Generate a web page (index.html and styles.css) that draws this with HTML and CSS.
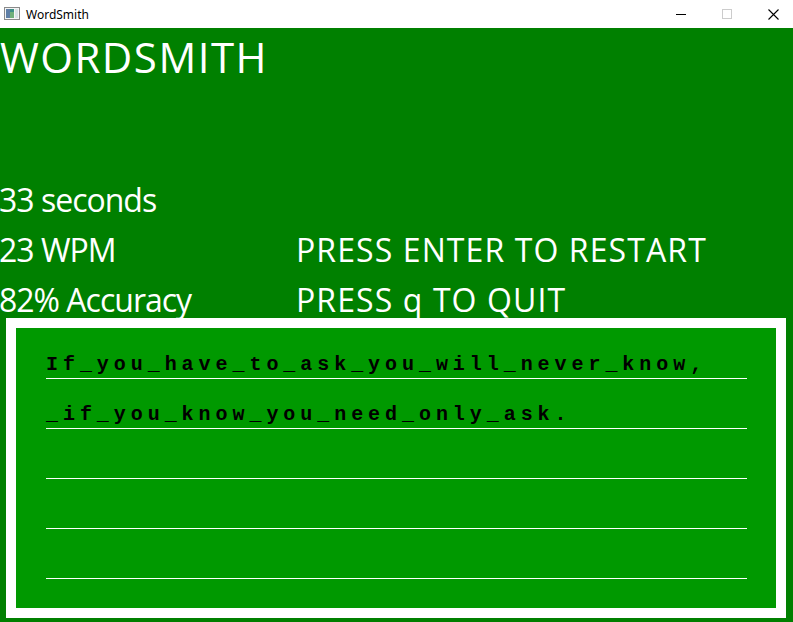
FILE: index.html
```html
<!DOCTYPE html>
<html>
<head>
<meta charset="utf-8">
<title>WordSmith</title>
<link rel="stylesheet" href="styles.css">
</head>
<body>
<div class="window">
  <div class="titlebar">
    <div class="app-icon">
      <svg width="16" height="13" viewBox="0 0 16 13">
        <rect x="0.5" y="0.5" width="15" height="12" fill="#f4f4f4" stroke="#8a8a8a"/>
        <rect x="2" y="2" width="8" height="9" fill="#3d8f86"/>
        <rect x="2" y="2" width="4" height="9" fill="#5f7fa6"/>
        <rect x="6" y="5" width="4" height="6" fill="#6fb07a"/>
        <rect x="11" y="2" width="3" height="9" fill="#d8e2e6"/>
      </svg>
    </div>
    <div class="title">WordSmith</div>
    <div class="controls">
      <div class="ctl"><svg width="10" height="10" viewBox="0 0 10 10"><line x1="0" y1="5.5" x2="10" y2="5.5" stroke="#000" stroke-width="1"/></svg></div>
      <div class="ctl"><svg width="10" height="10" viewBox="0 0 10 10"><rect x="0.5" y="0.5" width="9" height="9" fill="none" stroke="#cccccc" stroke-width="1"/></svg></div>
      <div class="ctl"><svg width="11" height="11" viewBox="0 0 11 11"><path d="M0.5 0.5 L10.5 10.5 M10.5 0.5 L0.5 10.5" stroke="#000" stroke-width="1.1"/></svg></div>
    </div>
  </div>
  <div class="main">
    <div class="heading">WORDSMITH</div>
    <div class="stats">
      <div class="stat stat-left">33 seconds</div>
      <div class="stat stat-right"></div>
      <div class="stat stat-left">23 WPM</div>
      <div class="stat stat-right">PRESS ENTER TO RESTART</div>
      <div class="stat stat-left">82% Accuracy</div>
      <div class="stat stat-right">PRESS q TO QUIT</div>
    </div>
    <div class="board">
      <div class="line">If_you_have_to_ask_you_will_never_know,</div>
      <div class="line">_if_you_know_you_need_only_ask.</div>
      <div class="line"></div>
      <div class="line"></div>
      <div class="line"></div>
    </div>
  </div>
</div>
</body>
</html>
```
FILE: styles.css
```css
html, body {
  margin: 0;
  padding: 0;
  background: #ffffff;
}
.window {
  width: 793px;
  height: 622px;
  overflow: hidden;
  display: flex;
  flex-direction: column;
}
.titlebar {
  height: 28px;
  background: #ffffff;
  display: flex;
  align-items: center;
  flex: none;
}
.app-icon {
  width: 16px;
  height: 13px;
  margin-left: 4px;
  margin-top: -1px;
  display: flex;
}
.title {
  margin-left: 6px;
  font-family: "Noto Sans", "Open Sans", sans-serif;
  font-size: 12px;
  color: #000000;
  flex: 1;
}
.controls {
  display: flex;
  height: 28px;
  margin-right: -3px;
}
.ctl {
  width: 46px;
  height: 28px;
  display: flex;
  align-items: center;
  justify-content: center;
}
.main {
  flex: 1;
  background: #008000;
  color: #ffffff;
  font-family: "Comic Sans MS", "Open Sans", sans-serif;
  display: flex;
  flex-direction: column;
}
.heading {
  font-size: 42px;
  line-height: 50px;
  margin-top: 4px;
  margin-left: 0;
  height: 50px;
  letter-spacing: 1.5px;
  white-space: nowrap;
}
.stats {
  margin-top: 99px;
  display: grid;
  grid-template-columns: 296px 1fr;
  row-gap: 12px;
  font-size: 32px;
  line-height: 38px;
}
.stat {
  height: 38px;
  white-space: nowrap;
}
.stat-left {
  letter-spacing: -1px;
  margin-left: -1px;
}
.stat-right {
  letter-spacing: 1.1px;
}
.board {
  margin: -1px 0 0 6px;
  width: 780px;
  height: 300px;
  box-sizing: border-box;
  border: 10px solid #ffffff;
  background: #009900;
  padding-top: 1px;
  display: flex;
  flex-direction: column;
}
.line {
  margin: 0 29px 0 30px;
  height: 50px;
  box-sizing: border-box;
  border-bottom: 1px solid #ffffff;
  padding-top: 26px;
  font-family: "Liberation Mono", "Courier New", monospace;
  font-weight: bold;
  font-size: 20px;
  line-height: 20px;
  letter-spacing: 4.95px;
  color: #000000;
  white-space: nowrap;
}
```
